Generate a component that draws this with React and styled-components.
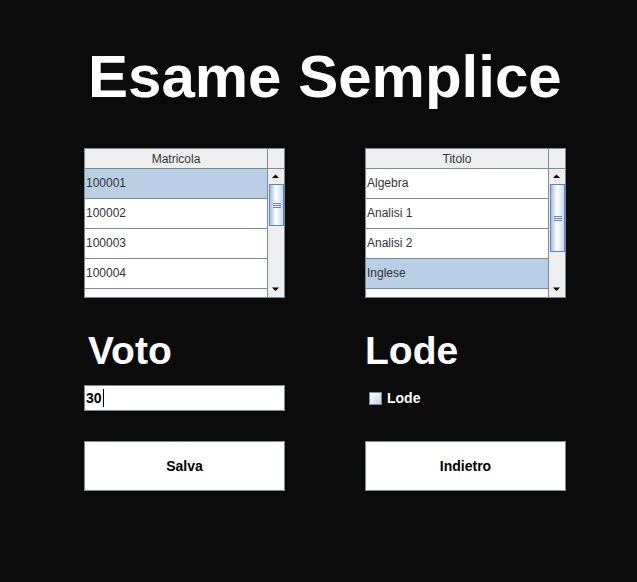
import styled, { createGlobalStyle } from "styled-components";

const GlobalStyle = createGlobalStyle`
  html, body {
    margin: 0;
    padding: 0;
    background: #0b0b0b;
  }
  body {
    font-family: "Liberation Sans", Arial, sans-serif;
  }
`;

const Page = styled.div`
  width: 637px;
  height: 582px;
  background: #0b0b0b;
  overflow: hidden;
`;

const Title = styled.h1`
  margin: 47px 0 0 88px;
  font-size: 60px;
  line-height: 60px;
  font-weight: bold;
  color: #ffffff;
  white-space: nowrap;
`;

const Form = styled.div`
  display: grid;
  grid-template-columns: 201px 201px;
  column-gap: 80px;
  margin: 41px 0 0 84px;
`;

const ScrollPane = styled.div`
  box-sizing: border-box;
  width: 201px;
  height: 150px;
  border: 1px solid #7a8a99;
  background: #ffffff;
  display: flex;
  flex-direction: column;
  overflow: hidden;
`;

const HeaderRow = styled.div`
  display: flex;
  height: 19px;
  border-bottom: 1px solid #7a8a99;
  background: #eeeeee;
`;

const HeaderCell = styled.div`
  flex: 1;
  font-size: 12px;
  line-height: 21px;
  text-align: center;
  color: #333340;
  border-right: 1px solid #7a8a99;
`;

const Corner = styled.div`
  width: 16px;
  background: #eeeeee;
`;

const Body = styled.div`
  flex: 1;
  display: flex;
  min-height: 0;
`;

const Rows = styled.div`
  flex: 1;
  border-right: 1px solid #7a8a99;
  overflow: hidden;
`;

const Row = styled.div`
  height: 29px;
  border-bottom: 1px solid #7a8a99;
  background: ${(p) => (p.selected ? "#b8cfe5" : "#ffffff")};
  color: #333333;
  font-size: 12px;
  line-height: 29px;
  padding-left: 1px;
`;

const ScrollBar = styled.div`
  width: 16px;
  display: flex;
  flex-direction: column;
  background: #eeeeee;
`;

const ArrowButton = styled.div`
  height: 15px;
  display: flex;
  align-items: center;
  justify-content: center;
  background: #eeeeee;
`;

const Track = styled.div`
  flex: 1;
  background: #eeeeee;
`;

const Thumb = styled.div`
  box-sizing: border-box;
  margin-left: 1px;
  width: 15px;
  border: 1px solid #6382bf;
  background: linear-gradient(to right, #a3bee2, #ffffff 45%, #c8daf0 100%);
  display: flex;
  flex-direction: column;
  align-items: center;
  justify-content: center;
  gap: 1px;
`;

const Grip = styled.div`
  width: 8px;
  height: 1px;
  background: #6382bf;
`;

const Label = styled.div`
  margin-top: 33px;
  padding-left: ${(p) => p.indent || 0}px;
  font-size: 39px;
  line-height: 39px;
  font-weight: bold;
  color: #ffffff;
`;

const TextField = styled.div`
  box-sizing: border-box;
  margin-top: 15px;
  height: 26px;
  border: 1px solid #7a8a99;
  background: #ffffff;
  display: flex;
  align-items: center;
  padding-left: 1px;
  font-size: 14px;
  font-weight: bold;
  color: #000000;
`;

const Caret = styled.span`
  display: inline-block;
  width: 1px;
  height: 18px;
  margin-left: 1px;
  background: #000000;
`;

const CheckRow = styled.label`
  margin-top: 15px;
  height: 26px;
  display: flex;
  align-items: center;
  gap: 5px;
  padding-left: 4px;
  font-size: 14px;
  font-weight: bold;
  color: #ffffff;
`;

const CheckBox = styled.span`
  box-sizing: border-box;
  width: 13px;
  height: 13px;
  border: 1px solid #7a8a99;
  background: linear-gradient(135deg, #ffffff, #c4d3e6);
`;

const Button = styled.button`
  box-sizing: border-box;
  margin-top: 30px;
  width: ${(p) => p.w}px;
  height: 50px;
  border: 1px solid #7a8a99;
  background: #ffffff;
  font-family: "Liberation Sans", Arial, sans-serif;
  font-size: 14px;
  font-weight: bold;
  color: #000000;
  padding: 0;
`;

function Arrow({ up }) {
  return (
    <svg width="8" height="5" viewBox="0 0 8 5">
      <polygon points={up ? "0,4 7,4 3.5,0.5" : "0,0.5 7,0.5 3.5,4"} fill="#000" />
    </svg>
  );
}

function Table({ title, items, selected, thumbHeight }) {
  return (
    <ScrollPane>
      <HeaderRow>
        <HeaderCell>{title}</HeaderCell>
        <Corner />
      </HeaderRow>
      <Body>
        <Rows>
          {items.map((item, i) => (
            <Row key={i} selected={i === selected}>
              {item}
            </Row>
          ))}
          <Row />
        </Rows>
        <ScrollBar>
          <ArrowButton>
            <Arrow up />
          </ArrowButton>
          <Track>
            <Thumb style={{ height: thumbHeight }}>
              <Grip />
              <Grip />
              <Grip />
            </Thumb>
          </Track>
          <ArrowButton>
            <Arrow />
          </ArrowButton>
        </ScrollBar>
      </Body>
    </ScrollPane>
  );
}

export default function App() {
  return (
    <Page>
      <GlobalStyle />
      <Title>Esame Semplice</Title>
      <Form>
        <Table
          title="Matricola"
          items={["100001", "100002", "100003", "100004"]}
          selected={0}
          thumbHeight={42}
        />
        <Table
          title="Titolo"
          items={["Algebra", "Analisi 1", "Analisi 2", "Inglese"]}
          selected={3}
          thumbHeight={68}
        />
        <Label indent={4}>Voto</Label>
        <Label>Lode</Label>
        <TextField>
          30
          <Caret />
        </TextField>
        <CheckRow>
          <CheckBox />
          Lode
        </CheckRow>
        <Button w={201}>Salva</Button>
        <Button w={201}>Indietro</Button>
      </Form>
    </Page>
  );
}
